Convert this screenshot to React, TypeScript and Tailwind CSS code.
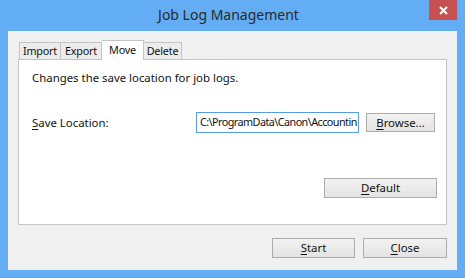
const ui = { fontFamily: '"Noto Sans", "Open Sans", sans-serif' };

function Btn({ k, rest, className }: { k: string; rest: string; className: string }) {
  return (
    <button
      className={`flex items-center justify-center border border-[#acacac] bg-gradient-to-b from-[#f2f2f2] to-[#e3e3e3] text-[11.4px] leading-none text-[#111] ${className}`}
    >
      <span>
        <span className="underline underline-offset-2">{k}</span>
        {rest}
      </span>
    </button>
  );
}

function Tab({ label, active, className }: { label: string; active?: boolean; className: string }) {
  if (active) {
    return (
      <div
        className={`relative z-10 -mb-px flex h-[20px] items-start justify-center border border-b-0 border-[#c4c4c4] bg-white pt-[1px] text-[10.8px] leading-[16px] tracking-[-0.2px] ${className}`}
      >
        {label}
      </div>
    );
  }
  return (
    <div
      className={`flex h-[17px] items-center justify-center border border-b-0 border-[#c4c4c4] bg-[#ececec] text-[10.8px] leading-none tracking-[-0.2px] ${className}`}
    >
      {label}
    </div>
  );
}

export default function App() {
  return (
    <div className="flex h-[278px] w-[465px] flex-col bg-[#62adf4] text-[#111]" style={ui}>
      <div className="grid h-[31px] grid-cols-[1fr_auto_1fr] pr-[8px]">
        <div />
        <div className="pt-[5px] text-[14px] leading-[20px] text-[#2a2a2a]">Job Log Management</div>
        <div className="flex justify-end">
          <div className="flex h-[20px] w-[28px] items-center justify-center bg-[#c75050]">
            <svg width="9" height="9" viewBox="0 0 9 9">
              <path d="M1 1L8 8M8 1L1 8" stroke="white" strokeWidth="2" />
            </svg>
          </div>
        </div>
      </div>

      <div className="mx-[8px] flex h-[239px] flex-col bg-[#f0f0f0] px-[10px] pt-[9px]">
        <div className="flex items-end pl-[1px]">
          <Tab label="Import" className="w-[42px]" />
          <Tab label="Export" className="w-[41px] border-l-0" />
          <Tab label="Move" active className="w-[42px] border-l-0" />
          <Tab label="Delete" className="w-[38px] border-l-0" />
        </div>

        <div className="flex h-[166px] flex-col border border-[#c4c4c4] bg-white pl-[13px] pr-[9px] pt-[11px]">
          <p className="text-[11.4px] leading-[14px]">Changes the save location for job logs.</p>

          <div className="mt-[27px] flex items-center">
            <span className="w-[164px] text-[11.4px]">
              <span className="underline underline-offset-2">S</span>ave Location:
            </span>
            <div className="flex h-[21px] w-[163px] items-center overflow-hidden whitespace-nowrap border border-[#569de5] bg-white pl-[3px] text-[10.8px] tracking-[-0.55px]">
              C:\ProgramData\Canon\Accountin
            </div>
            <Btn k="B" rest="rowse..." className="ml-[7px] h-[19px] w-[69px]" />
          </div>

          <div className="mt-[45px] flex justify-end">
            <Btn k="D" rest="efault" className="h-[20px] w-[113px]" />
          </div>
        </div>

        <div className="mt-[13px] flex justify-end gap-[8px]">
          <Btn k="S" rest="tart" className="h-[20px] w-[83px]" />
          <Btn k="C" rest="lose" className="h-[20px] w-[84px]" />
        </div>
      </div>
    </div>
  );
}
